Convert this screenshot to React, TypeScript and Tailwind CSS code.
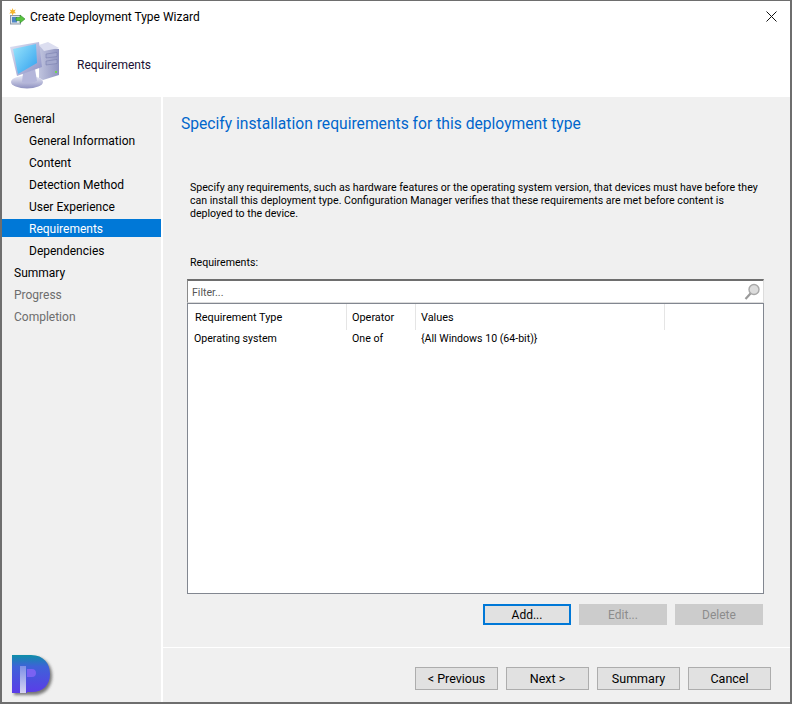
import React from "react";

const navItems: { label: string; sub?: boolean; active?: boolean; muted?: boolean }[] = [
  { label: "General" },
  { label: "General Information", sub: true },
  { label: "Content", sub: true },
  { label: "Detection Method", sub: true },
  { label: "User Experience", sub: true },
  { label: "Requirements", sub: true, active: true },
  { label: "Dependencies", sub: true },
  { label: "Summary" },
  { label: "Progress", muted: true },
  { label: "Completion", muted: true },
];

function TitleIcon() {
  return (
    <svg width="18" height="18" viewBox="0 0 18 18" className="shrink-0">
      <rect x="1.5" y="7.5" width="10" height="8.5" fill="#dfe4ea" stroke="#8c99a6" />
      <rect x="3" y="9" width="5" height="5.5" fill="#4f86c6" />
      <path d="M7 9.5h4V7l5 4-5 4v-2.5H7z" fill="#58c33f" stroke="#2f8a2a" strokeWidth="0.6" />
      <path d="M3.5 0l.9 2.2 2.4-.6-1.3 2 1.5 1.7-2.4-.1-1 2.2-.9-2.2-2.4.2L1.9 3.5.6 1.6l2.2.6z" fill="#f5b52e" />
    </svg>
  );
}

function ComputerIcon() {
  return (
    <svg width="52" height="50" viewBox="9 40 52 50" className="shrink-0">
      <defs>
        <linearGradient id="scr" x1="0" y1="0" x2="1" y2="1">
          <stop offset="0" stopColor="#9be6fc" />
          <stop offset="1" stopColor="#2f9fee" />
        </linearGradient>
        <linearGradient id="frame" x1="0" y1="0" x2="1" y2="1">
          <stop offset="0" stopColor="#e2e4f4" />
          <stop offset="1" stopColor="#8b8fc4" />
        </linearGradient>
        <linearGradient id="tower" x1="0" y1="0" x2="1" y2="0">
          <stop offset="0" stopColor="#c0c4de" />
          <stop offset="1" stopColor="#8f94c0" />
        </linearGradient>
        <linearGradient id="base" x1="0" y1="0" x2="0" y2="1">
          <stop offset="0" stopColor="#ecedf8" />
          <stop offset="1" stopColor="#8d90c0" />
        </linearGradient>
      </defs>
      <path d="M39 46l20 3v26l-16 5-4-2z" fill="url(#tower)" />
      <path d="M39 45l9-3 11 6-15 3z" fill="#dcdef0" />
      <path d="M46 54l11-1.5v4L46 58zM46 61l11-1.5v4L46 65z" fill="#a4a9ce" stroke="#7378a8" strokeWidth="0.5" />
      <rect x="55" y="71" width="2" height="2" fill="#6fd84f" />
      <ellipse cx="27" cy="82" rx="16" ry="6.5" fill="url(#base)" />
      <path d="M23 73l-1 9c3 2 12 1 15-1l-2-12z" fill="#b4b6da" />
      <path d="M10 47l29-5 3 25-25 9z" fill="url(#frame)" />
      <path d="M13 49l23-5 1 19-19 11z" fill="url(#scr)" />
    </svg>
  );
}

function Logo() {
  return (
    <svg width="46" height="46" viewBox="10 653 46 46" className="shrink-0">
      <defs>
        <linearGradient id="pfill" x1="0" y1="0" x2="0" y2="1">
          <stop offset="0" stopColor="#0e8fa8" />
          <stop offset="0.3" stopColor="#3e62d8" />
          <stop offset="1" stopColor="#5b3ce8" />
        </linearGradient>
        <linearGradient id="pslot" x1="0" y1="0" x2="0" y2="1">
          <stop offset="0" stopColor="#7d8fe6" />
          <stop offset="1" stopColor="#d6d3f2" />
        </linearGradient>
        <filter id="pblur" x="-30%" y="-30%" width="160%" height="160%">
          <feGaussianBlur stdDeviation="1.5" />
        </filter>
      </defs>
      <path
        d="M12 655H31C44 655 50 664 50 674C50 685 43 693 32 693H12Z"
        fill="#444444"
        opacity="0.7"
        filter="url(#pblur)"
        transform="translate(2 2)"
      />
      <path d="M12 655H31C44 655 50 664 50 674C50 685 43 692 32 692H27V693H12Z" fill="url(#pfill)" />
      <path d="M20 666H26V693H20Z" fill="url(#pslot)" />
      <path d="M27 669H32C35 669 36 671 36 673C36 675 35 677 32 677H27Z" fill="#7a62f2" />
    </svg>
  );
}

function WinButton({ label, focused, disabled }: { label: string; focused?: boolean; disabled?: boolean }) {
  const cls = focused
    ? "border-2 border-[#0078d7] bg-[#e1e1e1] text-[#000000]"
    : disabled
      ? "border border-[#cccccc] bg-[#cccccc] text-[#8c8c8c]"
      : "border border-[#adadad] bg-[#e1e1e1] text-[#000000]";
  return (
    <div className={`flex w-[88px] h-[21px] items-center justify-center text-[12px] ${cls}`}>{label}</div>
  );
}

function FootButton({ label }: { label: string }) {
  return (
    <div className="flex w-[83px] h-[23px] items-center justify-center border border-[#adadad] bg-[#e1e1e1] pt-[2px] text-[12.5px] text-[#000000]">
      {label}
    </div>
  );
}

export default function App() {
  return (
    <div
      className="flex h-[704px] w-[792px] flex-col border-t border-l-2 border-r-2 border-b-2 border-[#6e6e6e] bg-white text-[#000000]"
      style={{ fontFamily: 'Roboto, "Noto Sans", sans-serif' }}
    >
      <div className="flex h-[31px] shrink-0 items-center pl-[7px] pr-[12px]">
        <TitleIcon />
        <span className="ml-[3px] text-[12px]">Create Deployment Type Wizard</span>
        <svg width="11" height="11" viewBox="0 0 11 11" className="ml-auto mr-[1px]">
          <path d="M0.5 0.5l10 10M10.5 0.5l-10 10" stroke="#111" strokeWidth="1" fill="none" />
        </svg>
      </div>

      <div className="flex h-[65px] shrink-0 items-center pl-[7px]">
        <ComputerIcon />
        <span className="ml-[16px] text-[12px] text-[#1a1033]">Requirements</span>
      </div>

      <div className="flex min-h-0 flex-1">
        <nav className="flex w-[159px] shrink-0 flex-col bg-[#f0f0f0] pt-[10px]">
          {navItems.map((it) => (
            <div
              key={it.label}
              className={`my-[2px] flex h-[18px] items-center pt-[2px] text-[12px] ${it.sub ? "pl-[27px]" : "pl-[12px]"} ${
                it.active ? "bg-[#0078d7] text-white" : it.muted ? "text-[#6d6d6d]" : "text-[#000000]"
              }`}
            >
              {it.label}
            </div>
          ))}
          <div className="mt-auto pb-[3px] pl-[8px]">
            <Logo />
          </div>
        </nav>

        <main className="ml-[2px] flex min-w-0 flex-1 flex-col bg-[#f0f0f0]">
          <div className="flex min-h-0 flex-1 flex-col pl-[18px] pr-[26px]">
            <h1 className="mt-[16px] h-[22px] text-[15.65px] font-normal leading-[22px] text-[#0066cc]">
              Specify installation requirements for this deployment type
            </h1>
            <p className="ml-[9px] mt-[46px] w-[572px] text-[10.6px] leading-[13px] text-[#000000]">
              Specify any requirements, such as hardware features or the operating system version, that devices must have before they can install this deployment type. Configuration Manager verifies that these requirements are met before content is deployed to the device.
            </p>
            <div className="ml-[9px] mt-[36px] h-[14px] text-[10.6px] leading-[14px]">Requirements:</div>
            <div className="ml-[6px] mt-[9px] flex h-[24px] shrink-0 items-center border-t-2 border-l border-r border-b border-t-[#6e6e6e] border-l-[#8a8a8a] border-r-[#dcdcdc] border-b-[#dcdcdc] bg-white pl-[4px] pr-[3px]">
              <span className="mt-[3px] text-[10.6px] text-[#555555]">Filter...</span>
              <svg width="16" height="18" viewBox="0 0 16 18" className="ml-auto">
                <circle cx="10" cy="6.5" r="5" fill="#dcdcdc" stroke="#a8a8a8" strokeWidth="1.4" />
                <path d="M6.5 10.5L1.5 16" stroke="#9a9a9a" strokeWidth="2.2" />
              </svg>
            </div>
            <div className="ml-[6px] flex h-[291px] shrink-0 flex-col border border-[#828790] bg-white">
              <div className="flex h-[26px] shrink-0 text-[10.9px]">
                <div className="flex w-[159px] items-center border-r border-[#e5e5e5] pl-[7px] pt-[2px]">Requirement Type</div>
                <div className="flex w-[69px] items-center border-r border-[#e5e5e5] pl-[5px] pt-[2px]">Operator</div>
                <div className="flex w-[249px] items-center border-r border-[#e5e5e5] pl-[5px] pt-[2px]">Values</div>
              </div>
              <div className="mt-[-2px] flex h-[22px] text-[10.6px]">
                <div className="flex w-[159px] items-center pl-[6px]">Operating system</div>
                <div className="flex w-[69px] items-center pl-[5px]">One of</div>
                <div className="flex items-center pl-[5px]">{"{All Windows 10 (64-bit)}"}</div>
              </div>
            </div>
            <div className="mt-[10px] flex justify-end gap-2 pr-[1px]">
              <WinButton label="Add..." focused />
              <WinButton label="Edit..." disabled />
              <WinButton label="Delete" disabled />
            </div>
          </div>
          <div className="flex h-[55px] shrink-0 items-start justify-end gap-2 border-t border-white pr-[19px] pt-[19px]">
            <FootButton label="< Previous" />
            <FootButton label="Next >" />
            <FootButton label="Summary" />
            <FootButton label="Cancel" />
          </div>
        </main>
      </div>
    </div>
  );
}
